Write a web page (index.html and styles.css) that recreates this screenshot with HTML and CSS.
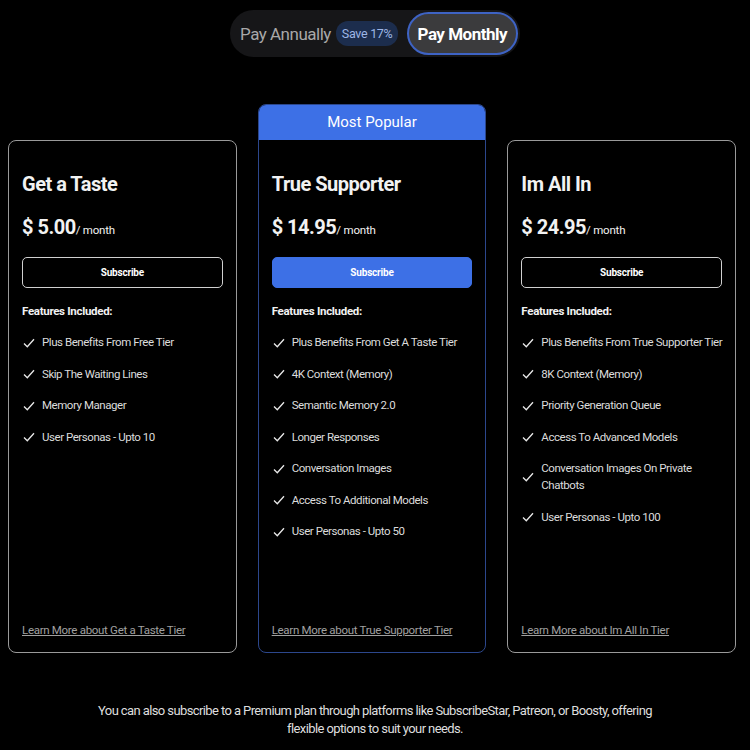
FILE: index.html
```html
<!DOCTYPE html>
<html lang="en">
<head>
  <meta charset="UTF-8">
  <meta name="viewport" content="width=device-width, initial-scale=1.0">
  <title>Premium Plans</title>
  <link rel="stylesheet" href="styles.css">
</head>
<body>
  <div class="billing-toggle">
    <div class="toggle-option">
      Pay Annually <span class="save-badge">Save 17%</span>
    </div>
    <button class="toggle-option active">Pay Monthly</button>
  </div>

  <div class="plans">
    <div class="plan">
      <h2 class="plan-name">Get a Taste</h2>
      <p class="plan-price">$ 5.00<span class="per">/ month</span></p>
      <button class="subscribe">Subscribe</button>
      <p class="features-title">Features Included:</p>
      <ul class="features">
        <li><svg class="check" viewBox="0 0 12 10"><path d="M1 5.5 L4.3 8.8 L11 1.2"/></svg>Plus Benefits From Free Tier</li>
        <li><svg class="check" viewBox="0 0 12 10"><path d="M1 5.5 L4.3 8.8 L11 1.2"/></svg>Skip The Waiting Lines</li>
        <li><svg class="check" viewBox="0 0 12 10"><path d="M1 5.5 L4.3 8.8 L11 1.2"/></svg>Memory Manager</li>
        <li><svg class="check" viewBox="0 0 12 10"><path d="M1 5.5 L4.3 8.8 L11 1.2"/></svg>User Personas - Upto 10</li>
      </ul>
      <a class="learn-more" href="#">Learn More about Get a Taste Tier</a>
    </div>

    <div class="plan popular">
      <div class="popular-banner">Most Popular</div>
      <div class="plan-inner">
        <h2 class="plan-name">True Supporter</h2>
        <p class="plan-price">$ 14.95<span class="per">/ month</span></p>
        <button class="subscribe primary">Subscribe</button>
        <p class="features-title">Features Included:</p>
        <ul class="features">
          <li><svg class="check" viewBox="0 0 12 10"><path d="M1 5.5 L4.3 8.8 L11 1.2"/></svg>Plus Benefits From Get A Taste Tier</li>
          <li><svg class="check" viewBox="0 0 12 10"><path d="M1 5.5 L4.3 8.8 L11 1.2"/></svg>4K Context (Memory)</li>
          <li><svg class="check" viewBox="0 0 12 10"><path d="M1 5.5 L4.3 8.8 L11 1.2"/></svg>Semantic Memory 2.0</li>
          <li><svg class="check" viewBox="0 0 12 10"><path d="M1 5.5 L4.3 8.8 L11 1.2"/></svg>Longer Responses</li>
          <li><svg class="check" viewBox="0 0 12 10"><path d="M1 5.5 L4.3 8.8 L11 1.2"/></svg>Conversation Images</li>
          <li><svg class="check" viewBox="0 0 12 10"><path d="M1 5.5 L4.3 8.8 L11 1.2"/></svg>Access To Additional Models</li>
          <li><svg class="check" viewBox="0 0 12 10"><path d="M1 5.5 L4.3 8.8 L11 1.2"/></svg>User Personas - Upto 50</li>
        </ul>
        <a class="learn-more" href="#">Learn More about True Supporter Tier</a>
      </div>
    </div>

    <div class="plan">
      <h2 class="plan-name">Im All In</h2>
      <p class="plan-price">$ 24.95<span class="per">/ month</span></p>
      <button class="subscribe">Subscribe</button>
      <p class="features-title">Features Included:</p>
      <ul class="features">
        <li><svg class="check" viewBox="0 0 12 10"><path d="M1 5.5 L4.3 8.8 L11 1.2"/></svg>Plus Benefits From True Supporter Tier</li>
        <li><svg class="check" viewBox="0 0 12 10"><path d="M1 5.5 L4.3 8.8 L11 1.2"/></svg>8K Context (Memory)</li>
        <li><svg class="check" viewBox="0 0 12 10"><path d="M1 5.5 L4.3 8.8 L11 1.2"/></svg>Priority Generation Queue</li>
        <li><svg class="check" viewBox="0 0 12 10"><path d="M1 5.5 L4.3 8.8 L11 1.2"/></svg>Access To Advanced Models</li>
        <li class="wrap-item"><svg class="check" viewBox="0 0 12 10"><path d="M1 5.5 L4.3 8.8 L11 1.2"/></svg>Conversation Images On Private Chatbots</li>
        <li><svg class="check" viewBox="0 0 12 10"><path d="M1 5.5 L4.3 8.8 L11 1.2"/></svg>User Personas - Upto 100</li>
      </ul>
      <a class="learn-more" href="#">Learn More about Im All In Tier</a>
    </div>
  </div>

  <p class="footnote">You can also subscribe to a Premium plan through platforms like SubscribeStar, Patreon, or Boosty, offering flexible options to suit your needs.</p>
</body>
</html>
```

FILE: styles.css
```css
body {
  margin: 0;
  padding: 10px 0 0;
  background-color: #000;
  color: #f2f2f2;
  font-family: Roboto, 'Liberation Sans', sans-serif;
}

.billing-toggle {
  display: flex;
  align-items: center;
  width: 290px;
  height: 47px;
  box-sizing: border-box;
  margin: 0 auto 47px;
  padding: 0 2px 0 10px;
  background-color: #161618;
  border-radius: 24px;
  white-space: nowrap;
}

.toggle-option {
  display: flex;
  align-items: center;
  gap: 5px;
  font-size: 17px;
  letter-spacing: -0.5px;
  color: #a8a8a8;
}

.save-badge {
  padding: 5px 6px;
  font-size: 12.5px;
  letter-spacing: -0.3px;
  color: #9db6e6;
  background-color: #1c2d4d;
  border-radius: 12px;
}

button.toggle-option.active {
  margin-left: auto;
  height: 43px;
  padding: 0 9px;
  font-family: inherit;
  font-weight: bold;
  color: #fff;
  background-color: #3b3b3d;
  border: 2px solid #3e63c4;
  border-radius: 22px;
}

.plans {
  display: grid;
  grid-template-columns: repeat(3, 1fr);
  gap: 21px;
  height: 549px;
  padding: 0 14px 0 8px;
}

.plan {
  display: flex;
  flex-direction: column;
  min-width: 0;
  margin-top: 36px;
  padding: 31px 8px 14px 13px;
  background-color: #000;
  border: 1px solid #9a9a9a;
  border-radius: 8px;
}

.plan.popular {
  margin-top: 0;
  padding: 0;
  border-color: #2c478c;
  overflow: hidden;
}

.popular-banner {
  height: 35px;
  line-height: 35px;
  text-align: center;
  font-size: 15px;
  color: #fff;
  background-color: #3d70e6;
}

.plan-inner {
  display: flex;
  flex-direction: column;
  flex: 1;
  padding: 32px 8px 14px 13px;
}

.plan-name {
  margin: 0;
  font-size: 20px;
  line-height: 24px;
  letter-spacing: -0.5px;
}

.plan-price {
  margin: 19px 0 0;
  font-size: 20px;
  line-height: 24px;
  font-weight: bold;
  letter-spacing: -0.5px;
}

.per {
  font-size: 11.5px;
  font-weight: normal;
  letter-spacing: -0.2px;
}

.subscribe {
  height: 31px;
  margin: 15px 5px 0 0;
  font-family: inherit;
  font-size: 10px;
  font-weight: bold;
  letter-spacing: -0.2px;
  color: #fff;
  background-color: #000;
  border: 1px solid #d0d0d0;
  border-radius: 5px;
}

.subscribe.primary {
  background-color: #3d70e6;
  border-color: #3d70e6;
}

.features-title {
  margin: 15px 0 0;
  font-size: 11.5px;
  line-height: 16px;
  font-weight: bold;
  letter-spacing: -0.3px;
}

.features {
  list-style-type: none;
  margin: 15px 0 0;
  padding: 0;
}

.features li {
  display: flex;
  align-items: center;
  gap: 7px;
  margin-bottom: 14.5px;
  font-size: 11.5px;
  line-height: 17px;
  letter-spacing: -0.45px;
  color: #dcdcdc;
}

.features li.wrap-item {
  padding-right: 25px;
}

.check {
  flex-shrink: 0;
  width: 12px;
  height: 10px;
  margin-left: 1px;
  fill: none;
  stroke: #e8e8e8;
  stroke-width: 1.3;
}

.learn-more {
  margin-top: auto;
  font-size: 11.5px;
  line-height: 16px;
  letter-spacing: -0.3px;
  color: #a0a0a0;
}

.footnote {
  max-width: 570px;
  margin: 49px auto 0;
  text-align: center;
  font-size: 13px;
  line-height: 18px;
  letter-spacing: -0.6px;
  color: #dedede;
}
```
